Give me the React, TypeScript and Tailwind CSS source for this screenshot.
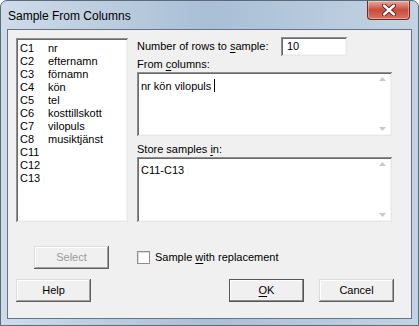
import React from "react";

const font = { fontFamily: '"Liberation Sans", Arial, sans-serif' };

function U({ children }: { children: React.ReactNode }) {
  return <span className="underline underline-offset-2">{children}</span>;
}

function Btn({
  children,
  className = "",
  def = false,
  disabled = false,
}: {
  children: React.ReactNode;
  className?: string;
  def?: boolean;
  disabled?: boolean;
}) {
  return (
    <div
      className={
        "flex h-[23px] w-[75px] items-center justify-center bg-[#f0f0f0] text-[11px] " +
        (def
          ? "border border-[#555] shadow-[inset_-1px_-1px_#8a8a8a,inset_1px_1px_#fff] "
          : "shadow-[inset_-1px_-1px_#5e5e5e,inset_1px_1px_#dcdcdc,inset_-2px_-2px_#a0a0a0,inset_2px_2px_#fff] ") +
        (disabled ? "text-[#9a9a9a] " : "text-black ") +
        className
      }
    >
      {children}
    </div>
  );
}

function ScrollArrows() {
  return (
    <div className="absolute right-[6px] top-[5px] bottom-[5px] flex flex-col justify-between">
      <svg width="7" height="4" viewBox="0 0 7 4">
        <path d="M0 4 L3.5 0 L7 4 Z" fill="#c8c8c8" />
      </svg>
      <svg width="7" height="4" viewBox="0 0 7 4">
        <path d="M0 0 L3.5 4 L7 0 Z" fill="#c8c8c8" />
      </svg>
    </div>
  );
}

const sunken =
  "bg-white shadow-[inset_1px_1px_#8e8e8e,inset_-1px_-1px_#e8e8e8,inset_2px_2px_#6a6a6a,inset_-2px_-2px_#f4f4f4]";

const rows: [string, string][] = [
  ["C1", "nr"],
  ["C2", "efternamn"],
  ["C3", "förnamn"],
  ["C4", "kön"],
  ["C5", "tel"],
  ["C6", "kosttillskott"],
  ["C7", "vilopuls"],
  ["C8", "musiktjänst"],
  ["C11", ""],
  ["C12", ""],
  ["C13", ""],
];

export default function App() {
  return (
    <div
      style={font}
      className="relative flex h-[326px] w-[419px] flex-col overflow-hidden rounded-t-[7px] border border-[#5b6b7e] bg-gradient-to-r from-[#cfdbe8] via-[#a9bfd6] to-[#c4d3e3]"
    >
      {/* Title bar */}
      <div className="flex h-[28px] shrink-0 items-start justify-between">
        <div className="pl-[7px] pt-[6px] text-[12px] text-black">Sample From Columns</div>
        <div className="mr-[8px] flex h-[19px] w-[43px] items-center justify-center rounded-b-[4px] border border-t-0 border-[#6b2a22] bg-gradient-to-b from-[#e8a89c] via-[#c94a3a] to-[#d87563] shadow-[inset_0_0_0_1px_rgba(255,255,255,0.35)]">
          <svg width="14" height="12" viewBox="0 0 14 12">
            <path d="M2 1.5 L12 10.5 M12 1.5 L2 10.5" stroke="#4a1a14" strokeWidth="4.2" strokeLinecap="round" />
            <path d="M2 1.5 L12 10.5 M12 1.5 L2 10.5" stroke="#ffffff" strokeWidth="2.4" strokeLinecap="round" />
          </svg>
        </div>
      </div>

      {/* Client area */}
      <div className="mx-[6px] flex h-[290px] shrink-0 flex-col border border-[#62758b] bg-[#f0f0f0] text-[11px] text-black">
        <div className="flex pl-[8px] pt-[8px]">
          {/* Column list */}
          <div className={"h-[184px] w-[112px] px-[4px] pt-[4px] " + sunken}>
            {rows.map(([c, n]) => (
              <div key={c} className="flex h-[13px] items-center leading-[13px]">
                <span className="w-[28px]">{c}</span>
                <span>{n}</span>
              </div>
            ))}
          </div>

          {/* Right column */}
          <div className="ml-[9px] mt-[-1px] flex w-[255px] flex-col">
            <div className="flex h-[19px] items-center">
              <span className="w-[144px]">
                Number of rows to <U>s</U>ample:
              </span>
              <div className={"flex h-[19px] w-[66px] items-center pl-[6px] " + sunken}>10</div>
            </div>
            <div className="mt-[1px] h-[15px] leading-[15px]">
              From <U>c</U>olumns:
            </div>
            <div className={"relative h-[64px] w-[255px] px-[4px] pt-[5px] " + sunken}>
              <span>nr kön vilopuls </span>
              <span className="inline-block h-[13px] w-[1px] translate-y-[2px] bg-black" />
              <ScrollArrows />
            </div>
            <div className="mt-[5px] h-[16px] leading-[16px]">
              Store samples <U>i</U>n:
            </div>
            <div className={"relative h-[65px] w-[255px] px-[4px] pt-[5px] " + sunken}>
              <span>C11-C13</span>
              <ScrollArrows />
            </div>
          </div>
        </div>

        {/* Select + checkbox */}
        <div className="mt-[24px] flex items-center">
          <Btn disabled className="ml-[26px]">
            Select
          </Btn>
          <div className="ml-[28px] h-[13px] w-[13px] border border-[#8e8f8f] bg-white shadow-[inset_1px_1px_#dcdcdc]" />
          <span className="ml-[5px]">
            Sample <U>w</U>ith replacement
          </span>
        </div>

        {/* Bottom buttons */}
        <div className="mt-[10px] flex items-center">
          <Btn className="ml-[8px]">Help</Btn>
          <Btn def className="ml-[138px]">
            <U>O</U>K
          </Btn>
          <Btn className="ml-[15px]">Cancel</Btn>
        </div>
      </div>
    </div>
  );
}
